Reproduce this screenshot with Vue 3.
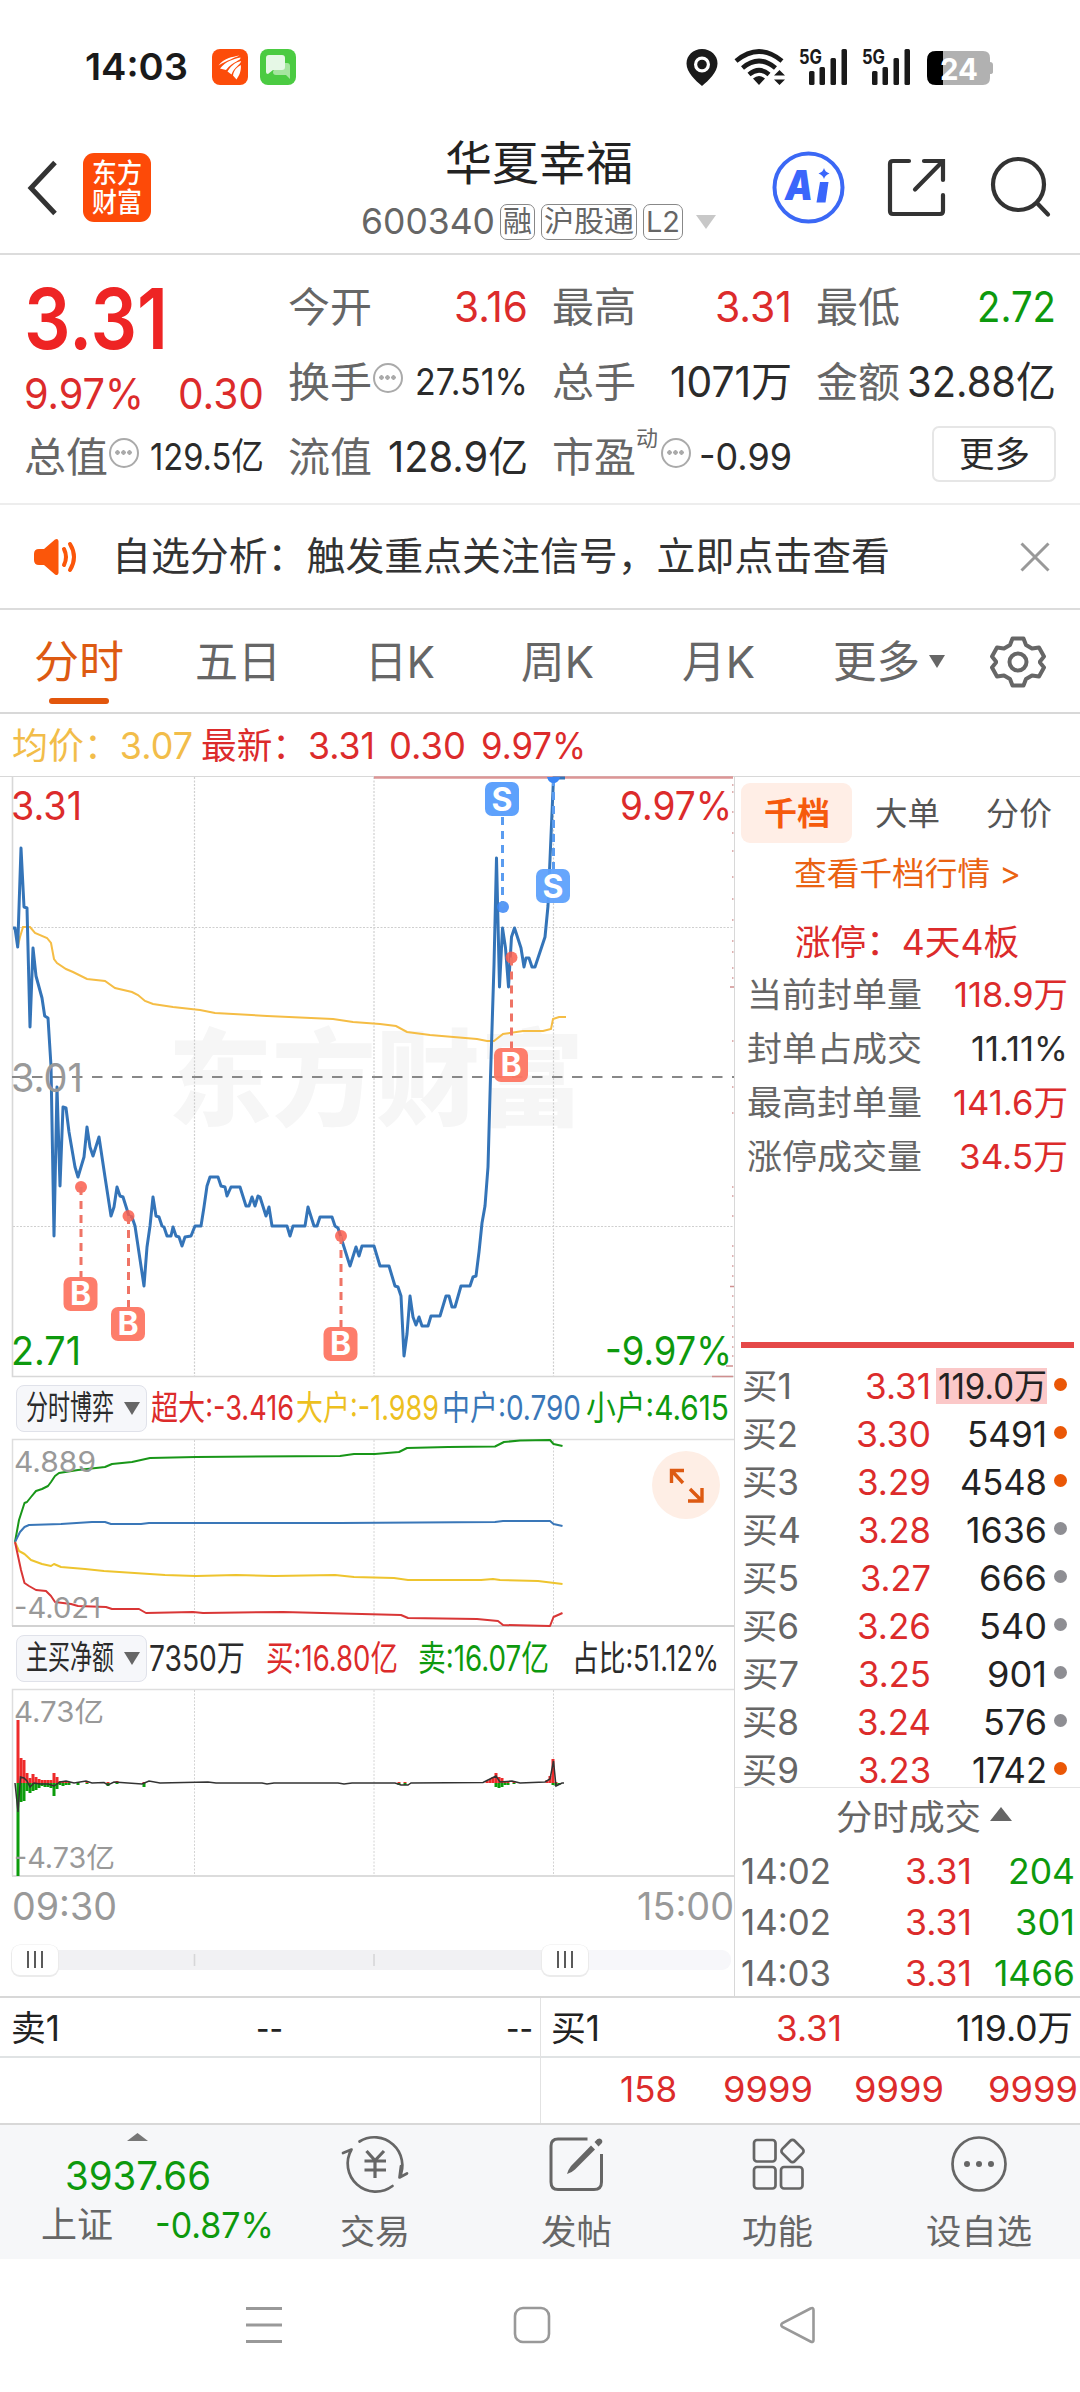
<script setup>
import { h, ref, onMounted } from 'vue'

// Text set to a given advance width by condensing or widening its glyphs.
const Fit = {
  props: { w: { type: Number, required: true } },
  setup(props, { slots }) {
    const inner = ref(null)
    const k = ref(1)
    onMounted(() => {
      k.value = props.w / inner.value.getBoundingClientRect().width
    })
    return () =>
      h('span', { class: 'fit', style: { width: props.w + 'px' } }, [
        h('span', {
          ref: inner,
          style: {
            display: 'inline-block',
            whiteSpace: 'nowrap',
            transformOrigin: '0 50%',
            transform: `scaleX(${k.value})`,
          },
        }, slots.default()),
      ])
  },
}

const tabs = [
  { t: '分时', w: 90, on: true },
  { t: '五日', w: 86 },
  { t: '日K', w: 70 },
  { t: '周K', w: 73 },
  { t: '月K', w: 73 },
]

const price = '13,928 15,928 17.7,947 21,848 24,907 27,908 30,1027 33,948 36,976 39,987 42,998 44.7,1016 48,1018 51,1066 54,1236 57,1087 60,1186 63,1107 66,1108 69,1132 75,1167 78,1177 84,1157 87,1127 90,1147 93,1156 99,1137 105,1177 111,1216 114,1207 117,1187 120,1196 123,1197 129,1216 132,1217 135,1226 144,1286 147,1247 150,1226 153,1197 156,1216 159,1217 162,1226 164,1227 167,1236 171,1236 173,1227 176,1236 179,1237 182,1246 185,1237 191,1236 195,1226 201,1226 204,1207 207,1186 210,1177 218,1177 221,1186 225,1187 227,1196 231,1187 240,1187 246,1206 249,1206 252,1197 255,1206 258,1196 260,1197 266,1216 269,1207 272,1226 287,1226 290,1236 293,1226 305,1226 308,1207 314,1226 317,1226 320,1217 332,1217 335,1226 338,1228 350,1266 356,1247 359,1256 362,1246 374,1246 380,1266 389,1266 395,1286 398,1287 401,1296 404,1356 407,1334 410,1296 413,1317 416,1325 419,1317 422,1326 428,1326 431,1316 440,1316 446,1296 449,1296 452,1307 455,1307 461,1286 470,1286 473,1277 476,1276 479,1252 482,1223 485,1206 488,1167 490.5,1077 494,965 496.5,858 499.5,987 502.5,928 505.5,948 508.5,987 511.5,937 514.5,928 521,948 524,967 526,958 529,958 532,967 535,967 538,958 545,937 548,906 551,836 553.5,778 565,778'
const avg = '17.7,947 20,937 23,927 30,927 35,933 47,938 51,943 54,959 57,963 66,969 73,972 87,979 105,981 115,988 132,992 138,995 145,1001 153,1004 173,1007 200,1010 215,1013 267,1016 333,1019 353,1022 380,1024 396,1026 407,1032 430,1035 477,1039 487,1041 494,1041 503,1034 523,1031 543,1031 551,1029 553,1019 559,1017 566,1017'

const flows = [
  { c: '#189618', p: '15,1542 19,1520 24.5,1503 27,1502 31,1497 36,1491 42,1489 48,1486 51,1482 55,1476 59,1473 78,1470 105,1467 112,1464 132,1462 150,1458 196,1457 340,1456 354,1454 375,1454 399,1452 407,1448 448,1447 495,1446.5 504,1442 520,1440.5 550,1440 553.5,1444 562.5,1446' },
  { c: '#3a77b8', p: '15,1542 20,1532 24.5,1527 29,1525 61,1524 92,1522 105,1522 111,1524 141,1524 149,1523 340,1523 495,1522 503,1521 550,1521 553.5,1524 562.5,1526' },
  { c: '#eec42e', p: '15,1542 19,1551 24.5,1554 31,1560 42,1564 51,1566 54,1564 61,1567 85,1569 104,1571 165,1575 196,1576 236,1575 274,1576 335,1575 354,1577 394,1578 408,1580 481,1580 493,1579 500,1580 538,1581 562.5,1584' },
  { c: '#d93636', p: '15,1542 21,1570 24.5,1583 29,1586 36,1590 46,1591 51,1596 55,1602 71,1604 78,1606 106,1607 112,1609 139,1609 146,1613 193,1612 203,1613 283,1612 401,1615 408,1618 477,1619 498,1621 503,1625 550,1626 553.5,1617 562.5,1613' },
]

const buys = [
  { x: 81, y: 1187, b: 1277 },
  { x: 128.5, y: 1216, b: 1307 },
  { x: 341, y: 1236, b: 1327 },
  { x: 511.5, y: 957.5, b: 1048 },
]

// Minute bars: x, height above the axis, height below it.
const bars = [
  [18, 63, 93], [21, 25, 19], [24, 23, 18], [27, 10, 8], [30, 5, 10], [33, 9, 8], [36, 6, 7], [39, 4, 5], [42, 3, 3],
  [45, 3, 4], [48, 3, 4], [51, 3, 5], [54, 10, 13], [57, 6, 6], [60, 2, 2], [63, 2, 3], [66, 2, 2], [69, 1, 2], [78, 1, 2],
  [87, 2, 1], [108, 1, 3], [117, 2, 1], [144, 1, 4], [399, 1, 2], [405, 1, 2],
  [487, 2, 0], [490, 4, 0], [493, 6, 0], [496, 10, 4], [499, 6, 5], [502, 5, 4], [505, 2, 2], [508, 1, 2], [514, 2, 1],
  [547, 3, 0], [550, 7, 0], [553, 24, 2], [556, 1, 3], [559, 0, 2],
]
const net = '15,1783 18,1812 20.5,1777 24,1778 27,1781 30,1787 34,1783 40,1784 48,1784 54,1786 60,1782 66,1781 74,1783 86,1781 92,1783 104,1782.5 108,1785 114,1782 142,1784 149,1781 160,1783 208,1782 216,1783 262,1783 267,1784 274,1783 338,1783 344,1784 352,1783 395,1783 401,1785 408,1785 411,1783 483,1782.5 490,1779 496,1776 500,1782 512,1781 520,1783 545,1782 550,1779 553.5,1761 556,1786 562,1783 564,1783'

const vlines = [194.5, 374, 553.5]
const ticks = [785, 792, 812, 833, 851, 877, 899, 920, 941, 952, 968, 978, 1041, 1087, 1113, 1187, 1196, 1216, 1246, 1256, 1266, 1276, 1296, 1307, 1317, 1326, 1337, 1347, 1356]

const seals = [
  { l: '当前封单量', v: '118.9万', w: 114, red: true },
  { l: '封单占成交', v: '11.11%', w: 97 },
  { l: '最高封单量', v: '141.6万', w: 115, red: true },
  { l: '涨停成交量', v: '34.5万', w: 109, red: true },
]
const bids = [
  { n: 1, lw: 50, p: '3.31', pw: 66, v: '119.0万', vw: 109, hot: true, hl: true },
  { n: 2, lw: 56, p: '3.30', pw: 75, v: '5491', vw: 80, hot: true },
  { n: 3, lw: 57, p: '3.29', pw: 74, v: '4548', vw: 87, hot: true },
  { n: 4, lw: 59, p: '3.28', pw: 73, v: '1636', vw: 81 },
  { n: 5, lw: 57, p: '3.27', pw: 71, v: '666', vw: 68 },
  { n: 6, lw: 57, p: '3.26', pw: 74, v: '540', vw: 68 },
  { n: 7, lw: 57, p: '3.25', pw: 73, v: '901', vw: 60 },
  { n: 8, lw: 57, p: '3.24', pw: 74, v: '576', vw: 64 },
  { n: 9, lw: 57, p: '3.23', pw: 73, v: '1742', vw: 75, hot: true },
]
const trades = [
  { t: '14:02', v: '204', w: 67 },
  { t: '14:02', v: '301', w: 60 },
  { t: '14:03', v: '1466', w: 81 },
]
const queue = [
  { v: '158', w: 57 },
  { v: '9999', w: 90 },
  { v: '9999', w: 90 },
  { v: '9999', w: 90 },
]
</script>

<template>
  <div class="screen">
    <div class="status">
      <Fit :w="103" class="clock">14:03</Fit>
      <svg class="app-a" width="36" height="36" viewBox="0 0 36 36">
        <rect width="36" height="36" rx="8" fill="#fc4c0a" />
        <path d="M6.500 16.500 C12 9 20 8 27.500 6.500 C22 9 16 11 6.500 16.500 Z M8 19.500 C14 12 22 10 28.500 8.500 C29 12 21 12 14 21 Z M15.500 22.500 C20 15 25 13 29 12 C28.500 16 22 18 19.500 25.500 Z M21 26.500 C22 20 26 18 28.800 16 C29.500 22 27 27 24.500 30.500 Z" fill="#fff" />
      </svg>
      <svg class="app-b" width="36" height="36" viewBox="0 0 36 36">
        <rect width="36" height="36" rx="8" fill="#4bcb42" />
        <path d="M16 14h11q3 0 3 3v13l-4-4H16q-3 0-3-3z" fill="#a5e59f" />
        <path d="M9 6h13q3 0 3 3v9q0 3-3 3h-9l-5 4q-2 0-2-2V9q0-3 3-3z" fill="#e6f8e6" />
      </svg>
      <svg class="sys" width="310" height="60" viewBox="684 37 310 60">
        <path fill="#1a1a1a" fill-rule="evenodd" d="M702 49c-9 0-15.500 6.500-15.500 14.500 0 9 9 17 15.500 22.500 6.500-5.500 15.500-13.500 15.500-22.500C717.500 55.500 711 49 702 49zm0 7.500a8 8 0 1 1 0 16 8 8 0 0 1 0-16z" />
        <circle cx="702" cy="64.500" r="4.800" fill="#1a1a1a" />
        <g fill="none" stroke="#1a1a1a" stroke-width="4.600">
          <path d="M736 61q23-19 46 0" />
          <path d="M742.500 68q16.500-14 33 0" />
          <path d="M749 74.500q10-8.500 20 0" />
        </g>
        <path d="M753 78.500q6-5 12 0l-6 6.500z M774 75.500l5.500-5.500 5.500 5.500z M774 79.500h11l-5.500 5.500z" fill="#1a1a1a" />
        <g v-for="dx in [0, 63]" :key="dx" fill="#1a1a1a">
          <rect :x="809 + dx" y="71" width="5.500" height="14" rx="1.500" />
          <rect :x="819.500 + dx" y="67" width="5.500" height="18" rx="1.500" />
          <rect :x="830.500 + dx" y="58" width="5.500" height="27" rx="1.500" />
          <rect :x="841.500 + dx" y="49" width="5.500" height="36" rx="1.500" />
          <text :x="799 + dx" y="63.500" font-size="20" font-weight="700" textLength="23" lengthAdjust="spacingAndGlyphs">5G</text>
        </g>
        <path d="M936 51h47q7 0 7 7v4q3 0 3 3v7q0 2-3 2v4q0 7-7 7h-47q-9 0-9-9V60q0-9 9-9z" fill="#b1b1b1" />
        <path d="M936 51h7v34h-7q-9 0-9-9V60q0-9 9-9z" fill="#000" />
        <text x="940" y="79.500" font-size="30" font-weight="700" fill="#fff" textLength="38" lengthAdjust="spacingAndGlyphs">24</text>
      </svg>
    </div>

    <header class="head">
      <div class="head-left">
        <svg width="34" height="60" viewBox="0 0 34 60"><path d="M31 4.500L7 30l24 25.500" fill="none" stroke="#333" stroke-width="5" /></svg>
        <div class="logo"><Fit :w="50">东方</Fit><Fit :w="50">财富</Fit></div>
      </div>
      <div class="head-mid">
        <div class="title"><Fit :w="188">华夏幸福</Fit></div>
        <div class="sub">
          <Fit :w="134" class="code">600340</Fit>
          <span class="tag"><Fit :w="29">融</Fit></span>
          <span class="tag"><Fit :w="90">沪股通</Fit></span>
          <span class="tag"><Fit :w="34">L2</Fit></span>
          <svg class="caret" width="22" height="16" viewBox="0 0 22 16"><path d="M1 1h20L11 15z" fill="#c8c8c8" /></svg>
        </div>
      </div>
      <svg class="head-right" width="290" height="76" viewBox="768 149 290 76">
        <circle cx="808.500" cy="187.500" r="34" fill="none" stroke="#3b68f5" stroke-width="4" />
        <text x="785" y="200" font-size="41" font-weight="900" font-style="italic" fill="#3a66fb" textLength="28" lengthAdjust="spacingAndGlyphs">A</text>
        <path d="M820 182h8.500l-3 20.500h-9z" fill="#3a66fb" />
        <path d="M824 168q1 4 5.500 5.500-4.500 1.500-5.500 5.500-1-4-5.500-5.500 4.500-1.500 5.500-5.500z" fill="#3a66fb" />
        <g fill="none" stroke="#333" stroke-width="4.200" stroke-linecap="round">
          <path d="M909 161h-16q-3 0-3 3v47q0 3 3 3h47q3 0 3-3v-16" />
          <path d="M924 161h19v19M942 162l-27 27.500" />
          <circle cx="1018.500" cy="184.500" r="25.500" />
          <path d="M1037 203l11 11.500" />
        </g>
      </svg>
    </header>

    <section class="quote">
      <div class="col">
        <div class="cell big"><Fit :w="144">3.31</Fit></div>
        <div class="cell mid red"><Fit :w="120">9.97%</Fit><Fit :w="86">0.30</Fit></div>
        <div class="cell"><span class="lab"><Fit :w="84">总值</Fit><i class="tip"></i></span><Fit :w="114" class="small">129.5亿</Fit></div>
      </div>
      <div class="col">
        <div class="cell"><Fit :w="84" class="lab">今开</Fit><Fit :w="74" class="red">3.16</Fit></div>
        <div class="cell"><span class="lab"><Fit :w="84">换手</Fit><i class="tip"></i></span><Fit :w="113" class="small">27.51%</Fit></div>
        <div class="cell"><Fit :w="84" class="lab">流值</Fit><Fit :w="140">128.9亿</Fit></div>
      </div>
      <div class="col">
        <div class="cell"><Fit :w="84" class="lab">最高</Fit><Fit :w="77" class="red">3.31</Fit></div>
        <div class="cell"><Fit :w="84" class="lab">总手</Fit><Fit :w="122">1071万</Fit></div>
        <div class="cell"><span class="lab"><Fit :w="84">市盈</Fit><Fit :w="22" class="sup">动</Fit><i class="tip pe"></i></span><Fit :w="93" class="small">-0.99</Fit></div>
      </div>
      <div class="col">
        <div class="cell"><Fit :w="84" class="lab">最低</Fit><Fit :w="79" class="green">2.72</Fit></div>
        <div class="cell"><Fit :w="84" class="lab">金额</Fit><Fit :w="149">32.88亿</Fit></div>
        <div class="cell end"><span class="more"><Fit :w="71">更多</Fit></span></div>
      </div>
    </section>

    <section class="notice">
      <svg width="48" height="40" viewBox="0 0 48 40">
        <path d="M6 12h5L22 2.500q3-1.500 3.500 1.500v32q-.5 3-3.500 1.500L11 28H6q-5 0-5-5v-6q0-5 5-5z" fill="#fb560a" />
        <path d="M31 12q4 8 0 16M37 7q8 13 0 26" fill="none" stroke="#fb560a" stroke-width="4" stroke-linecap="round" />
      </svg>
      <Fit :w="778" class="notice-text">自选分析：触发重点关注信号，立即点击查看</Fit>
      <svg class="close" width="30" height="30" viewBox="0 0 30 30"><path d="M1.500 1.500l27 27M28.500 1.500l-27 27" stroke="#999" stroke-width="3" /></svg>
    </section>

    <nav class="tabs">
      <span v-for="t in tabs" :key="t.t" class="tab" :class="{ on: t.on }"><Fit :w="t.w">{{ t.t }}</Fit></span>
      <span class="tab"><Fit :w="87">更多</Fit><svg class="dd" width="16" height="13" viewBox="0 0 16 13"><path d="M0 0h16L8 13z" fill="#666" /></svg></span>
      <svg class="gear" width="52" height="52" viewBox="-26 -26 52 52">
        <path d="M-5.500-23.500h11l2.500 6.500 6 3.500 7-1 5 9-4 5v1l4 5-5 9-7-1-6 3.500-2.500 6.500h-11l-2.500-6.500-6-3.500-7 1-5-9 4-5v-1l-4-5 5-9 7 1 6-3.500z" fill="none" stroke="#666" stroke-width="4" stroke-linejoin="round" />
        <circle r="8.500" fill="none" stroke="#666" stroke-width="4" />
      </svg>
    </nav>

    <div class="info">
      <Fit :w="181" class="gold">均价：3.07</Fit>
      <Fit :w="174" class="red">最新：3.31</Fit>
      <Fit :w="77" class="red">0.30</Fit>
      <Fit :w="105" class="red">9.97%</Fit>
    </div>

    <main class="body">
      <div class="left">
        <svg class="chart" width="734" height="602" viewBox="0 776 734 602">
          <text x="168" y="1117" class="mark" textLength="416" lengthAdjust="spacingAndGlyphs">东方财富</text>
          <g stroke="#cfcfcf" stroke-width="1.200" stroke-dasharray="2 1.500">
            <path v-for="x in vlines" :key="x" :d="`M${x} 777V1376`" />
            <path d="M13 927.500H733M13 1226.500H733" />
          </g>
          <path d="M12.500 777V1376.500H734" fill="none" stroke="#d8d8d8" stroke-width="1.600" />
          <path d="M12 1077H734" stroke="#888" stroke-width="2" stroke-dasharray="10.500 9.500" />
          <path d="M374 777.500H733" stroke="#dc9696" stroke-width="2.400" />
          <path d="M712 1376.500h21M730 987h4M730 1286.500h4M726 1366h7" stroke="#cf8f8f" stroke-width="1.600" />
          <path v-for="t in ticks" :key="t" :d="`M732 ${t}h1.500`" stroke="#d59a9a" stroke-width="1.500" />
          <polyline :points="avg" fill="none" stroke="#f5bd45" stroke-width="2" />
          <polyline :points="price" fill="none" stroke="#3474b8" stroke-width="3" stroke-linejoin="round" />
          <g v-for="b in buys" :key="b.x">
            <circle :cx="b.x" :cy="b.y" r="6" fill="#fa5e4e" fill-opacity=".85" />
            <path :d="`M${b.x} ${b.y}V${b.b}`" stroke="#ef7466" stroke-width="3" stroke-dasharray="8 6" />
            <rect :x="b.x - 17.500" :y="b.b" width="34" height="34" rx="7" fill="#fd7663" fill-opacity=".95" />
            <text :x="b.x - .5" :y="b.b + 28" class="badge">B</text>
          </g>
          <circle cx="503" cy="907" r="6" fill="#3a86f5" fill-opacity=".85" />
          <path d="M502.500 817V907M553.500 778V869" stroke="#5a9cf0" stroke-width="3" stroke-dasharray="8 6" />
          <path d="M547 777h13q-1.500 6-6.500 6t-6.500-6z" fill="#3a86f5" />
          <rect x="485" y="782" width="34" height="34" rx="7" fill="#5ea1fc" />
          <text x="502" y="811" class="badge">S</text>
          <rect x="536" y="869" width="34" height="34" rx="7" fill="#5ea1fc" fill-opacity=".95" />
          <text x="553" y="898" class="badge">S</text>
          <g font-size="39">
            <text x="11" y="820" fill="#dc2b2b" textLength="71" lengthAdjust="spacingAndGlyphs">3.31</text>
            <text x="11" y="1092" fill="#999" textLength="72" lengthAdjust="spacingAndGlyphs">3.01</text>
            <text x="11" y="1365" fill="#0d990d" textLength="70" lengthAdjust="spacingAndGlyphs">2.71</text>
            <text x="620" y="820" fill="#dc2b2b" textLength="112" lengthAdjust="spacingAndGlyphs">9.97%</text>
            <text x="605" y="1365" fill="#0d990d" textLength="127" lengthAdjust="spacingAndGlyphs">-9.97%</text>
          </g>
        </svg>

        <div class="legend one">
          <span class="select"><Fit :w="88">分时博弈</Fit><svg width="16" height="13" viewBox="0 0 16 13"><path d="M0 0h16L8 13z" fill="#666" /></svg></span>
          <Fit :w="143" class="red">超大:-3.416</Fit>
          <Fit :w="143" class="yellow">大户:-1.989</Fit>
          <Fit :w="139" class="blue">中户:0.790</Fit>
          <Fit :w="143" class="green">小户:4.615</Fit>
        </div>

        <div class="flow">
          <svg width="734" height="190" viewBox="0 1438 734 190">
            <path d="M12.500 1626V1439.500H734" fill="none" stroke="#dedede" stroke-width="1.500" />
            <path d="M12 1626H734" stroke="#d2d2d2" stroke-width="2" />
            <path v-for="x in vlines" :key="x" :d="`M${x} 1440V1626`" stroke="#d4d4d4" stroke-dasharray="2 1.500" />
            <polyline v-for="f in flows" :key="f.c" :points="f.p" fill="none" :stroke="f.c" stroke-width="2" stroke-linejoin="round" />
            <g font-size="28.500" fill="#999">
              <text x="14" y="1472" textLength="82" lengthAdjust="spacingAndGlyphs">4.889</text>
              <text x="14" y="1618" textLength="87" lengthAdjust="spacingAndGlyphs">-4.021</text>
            </g>
          </svg>
          <svg class="expand" width="68" height="68" viewBox="0 0 68 68">
            <circle cx="34" cy="34" r="34" fill="#feeee5" />
            <path d="M32 19.500H19.500V32M20 20L31 32M36 50H50V37M49.500 49.500L38 38" fill="none" stroke="#dd5a12" stroke-width="3.400" />
          </svg>
        </div>

        <div class="legend two">
          <span class="select"><Fit :w="88">主买净额</Fit><svg width="16" height="13" viewBox="0 0 16 13"><path d="M0 0h16L8 13z" fill="#666" /></svg></span>
          <Fit :w="96">7350万</Fit>
          <Fit :w="132" class="red">买:16.80亿</Fit>
          <Fit :w="131" class="green">卖:16.07亿</Fit>
          <Fit :w="147">占比:51.12%</Fit>
        </div>

        <svg class="chart" width="734" height="190" viewBox="0 1688 734 190">
          <path d="M12.500 1876V1689.500H734" fill="none" stroke="#dedede" stroke-width="1.500" />
          <path d="M12 1876H734" stroke="#dcdcdc" stroke-width="2" />
          <path v-for="x in vlines" :key="x" :d="`M${x} 1690V1876`" stroke="#d4d4d4" stroke-dasharray="2 1.500" />
          <g v-for="b in bars" :key="b[0]">
            <rect :x="b[0] - 1.500" :y="1783 - b[1]" width="3" :height="b[1]" fill="#ee2a2a" />
            <rect :x="b[0] - 1.500" y="1783" width="3" :height="b[2]" fill="#0c9c0c" />
          </g>
          <polyline :points="net" fill="none" stroke="#333" stroke-width="1.500" />
          <g font-size="28.500" fill="#999">
            <text x="14" y="1722" textLength="90" lengthAdjust="spacingAndGlyphs">4.73亿</text>
            <text x="14" y="1868" textLength="101" lengthAdjust="spacingAndGlyphs">-4.73亿</text>
          </g>
        </svg>

        <div class="axis"><Fit :w="105">09:30</Fit><Fit :w="97">15:00</Fit></div>

        <svg class="slider" width="734" height="50" viewBox="0 1935 734 50">
          <rect x="12" y="1950" width="719" height="20" rx="9" fill="#f7f7fa" />
          <path d="M30 1950H565V1970H30z" fill="#f1f1f3" />
          <path d="M194.500 1954V1966M374 1954V1966" stroke="#d6d6d8" stroke-width="1.600" />
          <g v-for="x in [12, 542]" :key="x">
            <rect :x="x - 1" y="1944.500" width="48" height="32.500" rx="9" fill="#ebebeb" />
            <rect :x="x" y="1945" width="46" height="30" rx="8" fill="#fff" />
            <path :d="`M${x + 16} 1951v17M${x + 23} 1951v17M${x + 30} 1951v17`" stroke="#5a5a5a" stroke-width="2" />
          </g>
        </svg>
      </div>

      <aside class="right">
        <div class="rtabs">
          <span class="rtab on"><Fit :w="66">千档</Fit></span>
          <span class="rtab"><Fit :w="65">大单</Fit></span>
          <span class="rtab"><Fit :w="66">分价</Fit></span>
        </div>
        <div class="link"><Fit :w="227">查看千档行情 &gt;</Fit></div>
        <div class="limit red"><Fit :w="224">涨停：4天4板</Fit></div>
        <div v-for="s in seals" :key="s.l" class="seal">
          <Fit :w="175" class="grey">{{ s.l }}</Fit>
          <Fit :w="s.w" :class="{ red: s.red }">{{ s.v }}</Fit>
        </div>
        <div class="redbar"></div>
        <div class="bids">
          <div v-for="b in bids" :key="b.n" class="bid">
            <Fit :w="b.lw" class="grey">买{{ b.n }}</Fit>
            <Fit :w="b.pw" class="red">{{ b.p }}</Fit>
            <span class="vol" :class="{ hl: b.hl }"><Fit :w="b.vw">{{ b.v }}</Fit></span>
            <i class="dot" :class="{ hot: b.hot }"></i>
          </div>
        </div>
        <div class="deals">
          <Fit :w="145">分时成交</Fit>
          <svg width="22" height="14" viewBox="0 0 22 14"><path d="M0 14h22L11 0z" fill="#666" /></svg>
        </div>
        <div v-for="(t, i) in trades" :key="i" class="trade">
          <Fit :w="90" class="grey">{{ t.t }}</Fit>
          <Fit :w="67" class="red">3.31</Fit>
          <Fit :w="t.w" class="green">{{ t.v }}</Fit>
        </div>
      </aside>
    </main>

    <section class="depth">
      <div class="half">
        <div class="drow"><Fit :w="49">卖1</Fit><Fit :w="27">--</Fit><Fit :w="27">--</Fit></div>
        <div class="queue"></div>
      </div>
      <div class="half">
        <div class="drow buy"><Fit :w="49">买1</Fit><Fit :w="66" class="red">3.31</Fit><Fit :w="117">119.0万</Fit></div>
        <div class="queue red"><span v-for="(q, i) in queue" :key="i"><Fit :w="q.w">{{ q.v }}</Fit></span></div>
      </div>
    </section>

    <footer class="bar">
      <div class="index">
        <svg width="21" height="8" viewBox="0 0 21 8"><path d="M0 8h21L10.500 0z" fill="#777" /></svg>
        <Fit :w="146" class="ix green">3937.66</Fit>
        <div class="ixrow"><Fit :w="72" class="grey">上证</Fit><Fit :w="119" class="green">-0.87%</Fit></div>
      </div>
      <div class="act">
        <svg width="70" height="62" viewBox="-35 -31 70 62">
          <g fill="none" stroke="#666" stroke-width="2.700" stroke-linecap="round" stroke-linejoin="round">
            <path d="M-15.500-22.500A28 28 0 0 1 24.500 13.500L32 9.500M24.500 13.500L26 2" />
            <path d="M17.500 22A28 28 0 0 1-23.500-14.500L-32-11" />
            <path d="M-8.500-13L0-3.500 9-13M0-3.500V14M-10.500-3H11M-10.500 6H11" stroke-linecap="butt" stroke-width="3.200" />
          </g>
        </svg>
        <Fit :w="70">交易</Fit>
      </div>
      <div class="act">
        <svg width="70" height="62" viewBox="-35 -31 70 62">
          <path d="M11.500-25H-18Q-25-25-25-18V18Q-25 25.500-18 25.500H18Q25.500 25.500 25.500 18V-10" fill="none" stroke="#666" stroke-width="3" />
          <path d="M15-18.500l4 4L-1 5.500q-3 3-8 4.500 1.500-5 4-8z M18.500-22l3-3q3-1.500 4.500 1 1 2-.5 3.500l-3 3z" fill="#666" />
        </svg>
        <Fit :w="71">发帖</Fit>
      </div>
      <div class="act">
        <svg width="70" height="62" viewBox="-35 -31 70 62">
          <g fill="none" stroke="#666" stroke-width="2.700">
            <rect x="-24" y="-24" width="21.500" height="21.500" rx="3" />
            <rect x="-24" y="3" width="21.500" height="21.500" rx="3" />
            <rect x="3" y="3" width="21.500" height="21.500" rx="3" />
            <rect x="-8.700" y="-8.700" width="17.400" height="17.400" rx="3" transform="translate(14.500 -13) rotate(45)" />
          </g>
        </svg>
        <Fit :w="71">功能</Fit>
      </div>
      <div class="act">
        <svg width="70" height="62" viewBox="-35 -31 70 62">
          <circle r="26.500" fill="none" stroke="#666" stroke-width="2.700" />
          <circle v-for="x in [-12, 0, 12]" :key="x" :cx="x" r="3" fill="#666" />
        </svg>
        <Fit :w="106">设自选</Fit>
      </div>
    </footer>

    <div class="sysnav">
      <svg width="40" height="40" viewBox="0 0 40 40"><path d="M2 3.500h36M2 20h36M2 36.500h36" stroke="#999" stroke-width="3" /></svg>
      <svg width="40" height="40" viewBox="0 0 40 40"><rect x="3" y="3" width="34" height="34" rx="8" fill="none" stroke="#999" stroke-width="2.600" /></svg>
      <svg width="40" height="40" viewBox="0 0 40 40"><path d="M35.500 5v30q0 3-3 1.500L4.500 22q-2.500-2 0-4L32.500 3.500q3-1.500 3 1.500z" fill="none" stroke="#999" stroke-width="2.600" /></svg>
    </div>
  </div>
</template>

<style>
body { margin: 0; background: #fff; }
</style>

<style scoped>
.screen { width: 1080px; height: 2392px; overflow: hidden; background: #fff; color: #2b2b2b; font-family: Inter, "Noto Sans CJK SC", sans-serif; line-height: 1; box-sizing: border-box; display: flex; flex-direction: column; }
.screen svg { display: block; flex: none; overflow: visible; }
.screen div, .screen section, .screen header, .screen nav, .screen footer, .screen aside, .screen main { box-sizing: border-box; flex: none; }
.fit { display: inline-block; flex: none; white-space: nowrap; line-height: 1.2; }
.red { color: #dc2b2b; }
.green { color: #0d990d; }
.grey { color: #666; }
.gold { color: #f2bd4a; }
.yellow { color: #edc01f; }
.blue { color: #3a77b8; }

.status { height: 134px; display: flex; align-items: center; padding-left: 85px; color: #1a1a1a; }
.clock { font-size: 37px; font-weight: 600; }
.app-a { margin-left: 24px; }
.app-b { margin-left: 12px; }
.sys { margin-left: 388px; }

.head { height: 121px; border-bottom: 2px solid #dcdcdc; display: grid; grid-template-columns: 360px 358px 50px 1fr; }
.head-left { display: flex; align-items: center; padding: 0 0 12px 24px; gap: 25px; }
.logo { width: 68px; height: 69px; border-radius: 11px; background: #fd4a08; color: #fff; font-size: 27px; font-weight: 500; display: flex; flex-direction: column; align-items: center; justify-content: center; }
.logo .fit { line-height: 29px; }
.head-mid { display: flex; flex-direction: column; align-items: center; }
.title { font-size: 47px; height: 58px; display: flex; align-items: center; color: #222; }
.sub { width: 358px; display: flex; align-items: center; margin-top: 12px; padding-left: 1px; height: 36px; font-size: 36px; color: #666; }
.tag { height: 36px; padding: 0 2px; border: 1.500px solid #888; border-radius: 7px; display: flex; align-items: center; font-size: 29px; margin-right: 6px; box-sizing: border-box; }
.code { margin-right: 5px; }
.caret { margin-left: 6px; }
.head-right { grid-column: 4; margin-top: 15px; }

.quote { height: 250px; padding: 15px 24px 0 24px; display: flex; gap: 24px; border-bottom: 2px solid #ededed; font-size: 42px; font-weight: 400; }
.col { width: 240px; display: flex; flex-direction: column; }
.cell { height: 75px; display: flex; align-items: center; justify-content: space-between; }
.cell.big { height: 98px; font-size: 84px; font-weight: 600; color: #ee2424; }
.cell.mid { height: 52px; }
.cell.end { justify-content: flex-end; }
.lab { color: #666; font-size: 41px; display: flex; align-items: center; }
.small { font-size: 37px; }
.sup { font-size: 22px; align-self: flex-start; margin-top: -8px; }
.tip { width: 30px; height: 30px; border: 2.500px solid #aaa; border-radius: 50%; box-sizing: border-box; margin: -9px 0 0 1px; background: radial-gradient(circle at 6.5px 12.5px, #aaa 2px, transparent 2.500px), radial-gradient(circle at 12.5px 12.5px, #aaa 2px, transparent 2.500px), radial-gradient(circle at 18.5px 12.5px, #aaa 2px, transparent 2.500px); }
.tip.pe { margin-left: 3px; }
.more { width: 124px; height: 56px; border: 2px solid #e6e6e6; border-radius: 7px; box-sizing: border-box; display: flex; align-items: center; justify-content: center; font-size: 35px; margin-top: -7px; }

.notice { height: 105px; border-bottom: 2px solid #dcdcdc; display: flex; align-items: center; padding: 0 30px 0 33px; font-size: 39px; color: #333; }
.notice-text { margin-left: 31px; }
.close { margin-left: auto; }

.tabs { height: 104px; border-bottom: 2px solid #d8d8d8; display: grid; grid-template-columns: 161px 170px 156px 161px 151px 159px 1fr; padding: 2px 0 0 34px; align-items: center; font-size: 44px; color: #666; }
.tab { display: flex; align-items: center; position: relative; }
.tab.on { color: #dd5a12; }
.tab.on::after { content: ""; position: absolute; left: 15px; top: 62px; width: 60px; height: 6px; border-radius: 3px; background: #e2560c; }
.dd { margin-left: 9px; }

.info { height: 62px; display: grid; grid-template-columns: 189px 188px 92px 110px; padding: 4px 0 0 12px; align-items: center; font-size: 36.500px; }

.body { height: 1222px; display: grid; grid-template-columns: 734px 1fr; border-top: 1.500px solid #d8d8d8; border-bottom: 2px solid #d8d8d8; }
.left { display: flex; flex-direction: column; }
.chart { margin-top: -1px; }
.left text, .status text, .head text { font-family: Inter, "Noto Sans CJK SC", sans-serif; }
.left text.mark { font-size: 105px; font-weight: 900; fill: #f6f6f6; }
.left text.badge { font-size: 32px; font-weight: 700; fill: #fff; text-anchor: middle; }
.legend { height: 60px; display: grid; align-items: center; padding-left: 16px; }
.legend.one { grid-template-columns: 135px 145px 146px 144px 144px; font-size: 34px; }
.legend.two { height: 61px; grid-template-columns: 133px 117px 152px 154px 144px; font-size: 35px; padding-bottom: 1px; }
.select { width: 131px; height: 47px; box-sizing: border-box; border: 1px solid #e0e2ea; border-radius: 8px; background: #f6f7fa; display: flex; align-items: center; padding-left: 9px; gap: 10px; font-size: 33px; }
.flow { position: relative; height: 190px; }
.expand { position: absolute; left: 652px; top: 13px; }
.axis { height: 57px; padding: 1px 0 0 12px; display: flex; justify-content: space-between; align-items: center; font-size: 38px; color: #999; }

.right { border-left: 1.500px solid #d8d8d8; font-size: 34px; display: flex; flex-direction: column; }
.rtabs { display: grid; grid-template-columns: 111px 111px 111px; height: 60px; margin: 6px 0 0 6px; font-size: 32px; color: #555; }
.rtab { display: flex; align-items: center; justify-content: center; border-radius: 9px; padding-top: 3px; }
.rtab.on { background: #ffeee6; color: #f65a0c; font-weight: 700; }
.link { height: 62px; display: flex; align-items: center; padding: 1px 0 0 59px; font-size: 32px; color: #ea6212; }
.limit { height: 72px; display: flex; align-items: center; padding: 1px 0 0 60px; font-size: 35px; }
.seal { height: 54px; display: flex; align-items: center; justify-content: space-between; padding: 1px 12px 0 12px; font-size: 34px; }
.limit + .seal { margin-top: -9px; }
.redbar { height: 6px; background: #e54848; margin: 158px 6px 0 6px; }
.bids { height: 440px; padding-top: 14px; overflow: hidden; border-bottom: 1.500px solid #e4e4e4; }
.bid { height: 48px; display: flex; align-items: center; padding-left: 7px; font-size: 35px; position: relative; }
.bid > .fit:nth-child(2) { margin-left: auto; }
.bid > .fit:nth-child(1) { margin-right: auto; }
.vol { width: 111px; height: 36px; display: flex; align-items: center; justify-content: flex-end; margin-left: 5px; box-sizing: border-box; color: #222; }
.vol.hl { background: #fbc8c8; }
.dot { width: 13px; height: 13px; border-radius: 50%; background: #8e8e93; margin: -3px 13px 0 7px; flex: none; }
.dot.hot { background: #ea5706; }
.deals { height: 57px; display: flex; align-items: center; padding-left: 101px; gap: 9px; font-size: 35px; color: #666; }
.deals svg { margin-top: -6px; }
.trade { height: 51px; display: grid; grid-template-columns: 1fr auto 103px; align-items: center; padding: 0 5px 0 6px; font-size: 35px; }
.trade .fit:last-child { justify-self: end; }

.depth { height: 127px; display: grid; grid-template-columns: 540px 540px; border-bottom: 2px solid #d8d8d8; font-size: 35px; color: #222; }
.half + .half { border-left: 1.500px solid #e2e2e2; }
.drow { height: 60px; border-bottom: 2px solid #e0e3e4; display: grid; grid-template-columns: 245px 1fr auto; align-items: center; padding: 2px 7px 0 11px; }
.drow.buy { grid-template-columns: 225px 1fr auto; padding-left: 10px; }
.queue { height: 62px; display: grid; grid-template-columns: 136px 133px 131px 134px; align-items: center; text-align: right; }

.bar { height: 134px; background: #f6f7f9; display: grid; grid-template-columns: 275px 201px 201px 202px 201px; font-size: 34px; color: #666; }
.index { display: flex; flex-direction: column; align-items: center; padding-top: 8px; }
.ix { font-size: 40px; margin-top: 11px; }
.ixrow { display: flex; gap: 42px; align-items: center; font-size: 36px; margin-top: 4px; padding-left: 41px; align-self: flex-start; }
.act { display: flex; flex-direction: column; align-items: center; padding: 8px 1px 0 0; gap: 17px; }
.sysnav { height: 132px; display: grid; grid-template-columns: 268px 266px 1fr; padding-left: 244px; align-items: center; }
</style>
